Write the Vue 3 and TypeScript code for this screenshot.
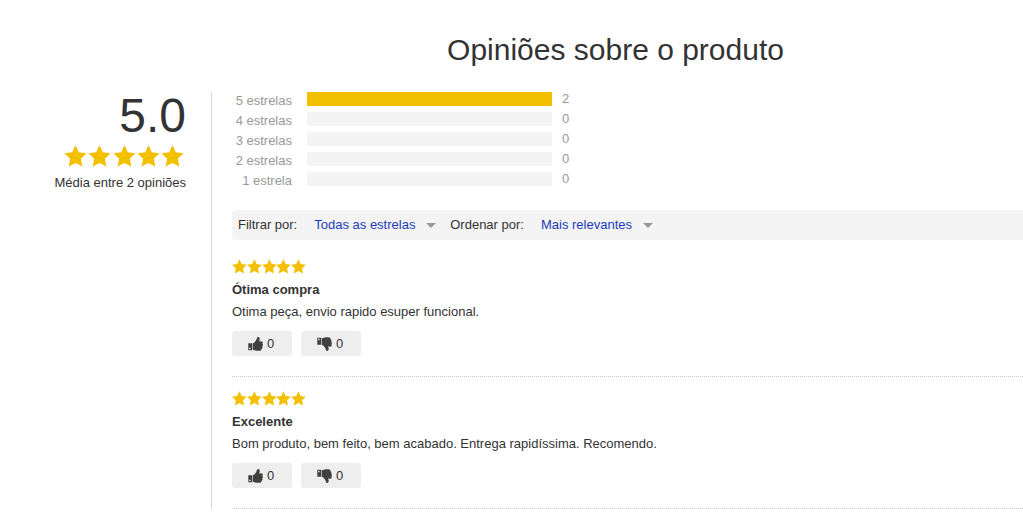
<script setup lang="ts">
import { ref } from 'vue'

interface Bucket {
  label: string
  count: number
}

interface Review {
  title: string
  text: string
  up: number
  down: number
}

const total = 2
const buckets: Bucket[] = [
  { label: '5 estrelas', count: 2 },
  { label: '4 estrelas', count: 0 },
  { label: '3 estrelas', count: 0 },
  { label: '2 estrelas', count: 0 },
  { label: '1 estrela', count: 0 },
]

const reviews = ref<Review[]>([
  { title: 'Ótima compra', text: 'Otima peça, envio rapido esuper funcional.', up: 0, down: 0 },
  { title: 'Excelente', text: 'Bom produto, bem feito, bem acabado. Entrega rapidíssima. Recomendo.', up: 0, down: 0 },
])

const filter = ref('Todas as estrelas')
const order = ref('Mais relevantes')

const star = 'M12 0.300 15.600 7.900 24 9 17.900 14.900 19.400 23.500 12 19.500 4.600 23.500 6.100 14.900 0 9 8.400 7.900Z'
</script>

<template>
  <main class="opinions">
    <h1 class="heading">Opiniões sobre o produto</h1>
    <div class="body">
      <aside class="summary">
        <p class="score">5.0</p>
        <div class="stars large" role="img" aria-label="5 de 5 estrelas">
          <svg v-for="n in 5" :key="n" viewBox="0 0 24 24"><path :d="star" /></svg>
        </div>
        <p class="average">Média entre 2 opiniões</p>
      </aside>

      <section class="content">
        <ul class="histogram">
          <li v-for="b in buckets" :key="b.label">
            <span class="bucket">{{ b.label }}</span>
            <span class="track"><span class="fill" :style="{ width: (b.count / total) * 100 + '%' }"></span></span>
            <span class="count">{{ b.count }}</span>
          </li>
        </ul>

        <form class="toolbar" @submit.prevent>
          <label for="filter">Filtrar por:</label>
          <span class="picker">
            <select id="filter" v-model="filter">
              <option>Todas as estrelas</option>
              <option v-for="b in buckets" :key="b.label">{{ b.label }}</option>
            </select>
            <svg viewBox="0 0 10 5"><path d="M0 0H10L5 5Z" /></svg>
          </span>
          <label for="order">Ordenar por:</label>
          <span class="picker">
            <select id="order" v-model="order">
              <option>Mais relevantes</option>
              <option>Mais recentes</option>
            </select>
            <svg viewBox="0 0 10 5"><path d="M0 0H10L5 5Z" /></svg>
          </span>
        </form>

        <article v-for="r in reviews" :key="r.title" class="review">
          <div class="stars small" role="img" aria-label="5 de 5 estrelas">
            <svg v-for="n in 5" :key="n" viewBox="0 0 24 24"><path :d="star" /></svg>
          </div>
          <h2>{{ r.title }}</h2>
          <p>{{ r.text }}</p>
          <div class="votes">
            <button type="button" aria-label="Útil" @click="r.up++">
              <svg viewBox="0 0 15 14">
                <path fill-rule="evenodd" d="M0.300 6.300H4.200V13.200H0.300ZM1.200 10.800V12.300H2.500V10.800Z" />
                <path d="M4.800 6.300C6.800 5.600 8.200 3.600 8.900 1.300C9.300 -0.200 11 -0.300 11.500 1C12 2.400 11.500 3.600 11 4.500L13.300 4.300C14.900 4.400 15.100 6.200 14.400 6.800C15.100 7.500 15 8.900 14.300 9.300C14.700 10.200 14.400 11.300 13.600 11.700C13.600 13 12.800 13.800 11.500 13.800H9C7.500 13.800 6.500 13 4.800 12.800Z" />
              </svg>
              <span>{{ r.up }}</span>
            </button>
            <button type="button" aria-label="Não útil" @click="r.down++">
              <svg viewBox="0 0 15 14">
                <path fill-rule="evenodd" d="M0.300 0.800H4.200V7.700H0.300ZM1.200 1.700V3.200H2.500V1.700Z" />
                <path d="M4.800 1.200C6.500 1 7.500 0.200 9 0.200H11.500C12.800 0.200 13.600 1 13.600 2.300C14.400 2.700 14.700 3.800 14.300 4.700C15 5.100 15.100 6.500 14.400 7.200C15.100 7.800 14.900 9.600 13.300 9.700L11 9.500C11.500 10.400 12 11.600 11.500 13C11 14.300 9.300 14.200 8.900 12.700C8.200 10.400 6.800 8.400 4.800 7.700Z" />
              </svg>
              <span>{{ r.down }}</span>
            </button>
          </div>
        </article>
      </section>
    </div>
  </main>
</template>

<style>
body {
  background: #fff;
}
</style>

<style scoped>
.opinions {
  font: 13px/20px "Liberation Sans", Arial, sans-serif;
  color: #333;
  padding: 30px 0 13px;
}
h1, h2, p, ul {
  margin: 0;
  padding: 0;
}
.heading {
  padding-left: 208px;
  font-size: 30px;
  line-height: 40px;
  font-weight: 400;
  text-align: center;
}
.body {
  display: flex;
  margin-top: 22px;
}
.summary {
  flex: none;
  width: 186px;
  padding-right: 25px;
  border-right: 1px solid #d8d8d8;
  text-align: right;
}
.score {
  font-size: 48px;
  line-height: 48px;
}
.stars {
  display: flex;
  justify-content: space-between;
}
.stars svg {
  display: block;
  fill: #f3c000;
}
.large {
  width: 120px;
  margin: 5px 2px 5px auto;
}
.large svg {
  width: 23px;
  height: 22px;
}
.large + .average {
  padding-top: 1px;
}
.small {
  width: 74px;
}
.small svg {
  width: 15px;
  height: 15px;
}
.content {
  flex: 1;
  min-width: 0;
  padding-left: 20px;
}
.histogram {
  list-style: none;
  color: #999;
}
.histogram li {
  display: flex;
  height: 20px;
  line-height: 14px;
}
.bucket {
  width: 60px;
  margin-right: 15px;
  padding-top: 2px;
  text-align: right;
}
.track {
  width: 245px;
  height: 14px;
  margin-right: 10px;
  background: #f4f4f4;
}
.fill {
  display: block;
  height: 100%;
  background: #f3c000;
}
.toolbar {
  display: flex;
  align-items: center;
  height: 30px;
  margin: 18px 0 5px;
  padding-left: 6px;
  background: #f4f4f4;
  border-radius: 3px 0 0 3px;
}
.picker {
  display: flex;
  align-items: center;
  position: relative;
  margin: 0 14px 0 17px;
}
.picker select {
  appearance: none;
  padding: 0 20px 0 0;
  border: 0;
  background: none;
  font: inherit;
  color: #1a3cb8;
}
.picker svg {
  position: absolute;
  right: 0;
  width: 10px;
  height: 5px;
  fill: #999;
  pointer-events: none;
}
.review {
  padding: 14px 0 20px;
  border-bottom: 1px dotted #ccc;
}
.review h2 {
  margin-top: 6px;
  font-size: 13px;
  line-height: 20px;
}
.review p {
  margin-top: 2px;
}
.votes {
  display: flex;
  gap: 9px;
  margin-top: 9px;
}
.votes button {
  display: flex;
  align-items: center;
  gap: 4px;
  width: 60px;
  height: 25px;
  padding: 0 0 0 16px;
  border: 0;
  border-radius: 3px;
  background: #eee;
  color: #333;
  font: inherit;
}
.votes svg {
  width: 15px;
  height: 14px;
  fill: #404040;
}
</style>
